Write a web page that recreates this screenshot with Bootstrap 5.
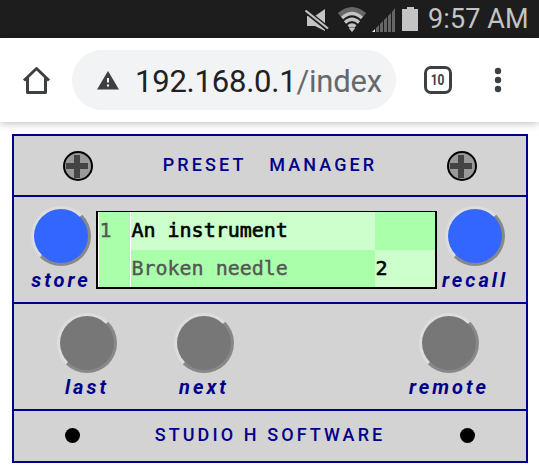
<!DOCTYPE html>
<html lang="en">
<head>
<meta charset="utf-8">
<meta name="viewport" content="width=device-width, initial-scale=1">
<title>Preset Manager</title>
<link href="https://cdn.jsdelivr.net/npm/bootstrap@5.3.0/dist/css/bootstrap.min.css" rel="stylesheet">
<style>
body{font-family:Roboto,sans-serif;width:539px;height:476px;overflow:hidden;background:#fff}
svg{display:block;flex:none}
.status{height:38px;background:#1d1d1d;padding:0 12px 0 0;color:#c4c4c4}
.clock{font-size:27px;line-height:38px;width:99px;white-space:nowrap;margin-left:10px;letter-spacing:.1px}
.toolbar{height:84px;padding-left:22px;box-shadow:0 1px 8px rgba(0,0,0,.28)}
.omni{width:324px;height:60px;background:#f1f3f4;padding-left:24px;margin-left:21px}
.url{font-size:31px;line-height:60px;color:#202124;margin-left:15px;padding-top:3px;letter-spacing:-.22px}
.url span{color:#65686d}
.tabs{width:28px;height:28px;border:3px solid #3c4043;border-radius:7px;margin-left:28px;font:bold 15px/22px Roboto,sans-serif;color:#3c4043}
.tabs span{transform:scaleX(.8)}
.menu{margin-right:37px}
.device{width:516px;margin:12px 0 0 12px;border:2px solid #00008b;background:#d3d3d3;color:#00008b}
.band{border-bottom:2px solid #00008b}
.b1{height:61px;padding:0 49px}
.b2{height:107px;padding-top:9px}
.b3{height:107px;padding:9px 36px 0 32px}
.b4{height:50px;padding:0 51px 1px}
.title{font-size:18px;font-weight:500;letter-spacing:3.1px;line-height:24px;white-space:pre;padding-bottom:2px}
.knob{width:60px;height:60px;border:3px solid;border-color:#ddd #888 #888 #ddd;border-radius:50%;background:#777;padding:0;display:block;flex:none}
.blue{background:#36f}
.tag{font-size:20px;font-weight:700;font-style:italic;letter-spacing:3px;line-height:24px;white-space:nowrap;margin-top:2px}
.unit{width:82px;flex:none}
.unit+.unit{margin-left:35px}
.left-end{padding-left:12px}
.right-end{width:76px}
.lcd{width:341px;height:78px;border:solid #000;border-width:1px 2px 2px;margin-top:5px;padding-left:1px;background:#fff;flex:none;display:grid;grid-template-columns:31px 1px 244px 60px;grid-template-rows:38px 37px;font:20px/36px "DejaVu Sans Mono",monospace;letter-spacing:-.02px;color:#000;white-space:nowrap}
.lcd>div{text-indent:.5px}
.lcd>.gap{grid-row:1/3;grid-column:2}
.g{background:#afa}.l{background:#cfc}.dim{color:#555;-webkit-text-stroke:.4px #555}
.c1{grid-column:1;grid-row:1/3}.c3{grid-column:3}.c4{grid-column:4}
.heavy{-webkit-text-stroke:.6px #000}
.led{width:15px;height:15px;background:#000}
</style>
<script src="https://cdn.jsdelivr.net/npm/bootstrap@5.3.0/dist/js/bootstrap.bundle.min.js"></script>
</head>
<body>
<header class="status d-flex align-items-center justify-content-end">
<svg width="113" height="38" viewBox="305 0 113 38">
<path d="M307 16h8l10-7v22l-10-5h-8z" fill="#c4c4c4"/>
<path d="M304 9.500L330 30.500" stroke="#1d1d1d" stroke-width="5"/>
<path d="M305.500 10.500L328 28.500" stroke="#c4c4c4" stroke-width="2.200"/>
<path d="M339.500 15Q352 4 364.500 15" fill="none" stroke="#666" stroke-width="5"/>
<g fill="none" stroke="#c4c4c4" stroke-width="3.2"><path d="M342 18Q352 9 362 18M345 22.500Q352 16 359 22.500M348.500 26.500Q352 23.500 355.500 26.500"/></g>
<path d="M349 28.500Q352 26 355 28.500L352 32z" fill="#c4c4c4"/>
<path d="M372 32l3-3v3z" fill="#eee"/>
<path d="M376 32v-4l3-3v7zM380 32v-8l3-3v11zM384 32v-12l3-3v15zM388 32v-16l3-3v19zM392 32v-20l3-4v24z" fill="#666"/>
<path d="M402 9h5V7h7v2h5v22h-17z" fill="#c4c4c4"/>
</svg>
<div class="clock">9:57 AM</div>
</header>
<nav class="toolbar d-flex align-items-center bg-white">
<svg width="29" height="29" viewBox="22 66 29 29"><path d="M24 80.500L36.500 68.500L49 80.500M27.500 78v14.500h18V78" fill="none" stroke="#3c4043" stroke-width="3" stroke-linejoin="round"/></svg>
<div class="omni rounded-pill d-flex align-items-center">
<svg width="24" height="20" viewBox="0 0 24 20"><path d="M12 1L23 19.500H1z" fill="#3c4043"/><path d="M12 8v4.500M12 14.500v2" stroke="#fff" stroke-width="2"/></svg>
<div class="url text-nowrap">192.168.0.1<span>/index</span></div>
</div>
<div class="tabs d-flex justify-content-center"><span>10</span></div>
<svg class="menu ms-auto" width="8" height="28" viewBox="0 0 8 28"><g fill="#3c4043"><circle cx="4" cy="5" r="3.200"/><circle cx="4" cy="14" r="3.200"/><circle cx="4" cy="23" r="3.200"/></g></svg>
</nav>
<main class="device">
<div class="band b1 d-flex align-items-center justify-content-between">
<svg width="30" height="30"><circle cx="15" cy="15" r="14" fill="#999" stroke="#000" stroke-width="2"/><path d="M3 15H25M14 4V27" stroke="#444" stroke-width="6"/></svg>
<div class="title">PRESET&nbsp;&nbsp; MANAGER</div>
<svg width="30" height="30"><circle cx="15" cy="15" r="14" fill="#999" stroke="#000" stroke-width="2"/><path d="M3 15H25M14 4V27" stroke="#444" stroke-width="6"/></svg>
</div>
<div class="band b2 d-flex align-items-start">
<div class="unit left-end d-flex flex-column align-items-center"><button class="knob blue" aria-label="store"></button><div class="tag">store</div></div>
<div class="lcd">
<div class="g c1 dim">1</div><div class="gap"></div>
<div class="l c3 heavy">An instrument</div><div class="g c4"></div>
<div class="g c3 dim">Broken needle</div><div class="l c4 heavy">2</div>
</div>
<div class="unit right-end d-flex flex-column align-items-center"><button class="knob blue" aria-label="recall"></button><div class="tag">recall</div></div>
</div>
<div class="band b3 d-flex justify-content-between">
<div class="d-flex">
<div class="unit d-flex flex-column align-items-center"><button class="knob" aria-label="last"></button><div class="tag">last</div></div>
<div class="unit d-flex flex-column align-items-center"><button class="knob" aria-label="next"></button><div class="tag">next</div></div>
</div>
<div class="unit d-flex flex-column align-items-center"><button class="knob" aria-label="remote"></button><div class="tag">remote</div></div>
</div>
<div class="b4 d-flex align-items-center justify-content-between">
<div class="led rounded-circle"></div>
<div class="title">STUDIO H SOFTWARE</div>
<div class="led rounded-circle"></div>
</div>
</main>
</body>
</html>
